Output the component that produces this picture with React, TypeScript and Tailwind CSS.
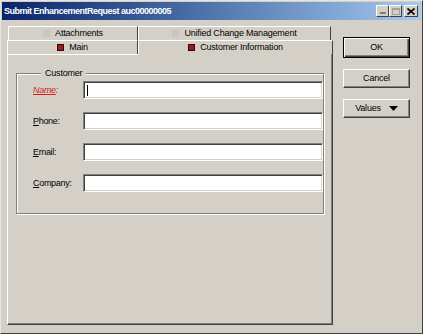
import React from 'react'

const FONT = { fontFamily: '"Liberation Sans", Arial, sans-serif' }

function TabIcon({ active }: { active: boolean }) {
  return active ? (
    <span className="inline-block w-[7px] h-[7px] bg-[#9b1b1b] border border-[#2a0a0a] mr-[5px]" />
  ) : (
    <span className="inline-block w-[7px] h-[7px] bg-[#c8c6c0] mr-[5px]" />
  )
}

function Tab({ label, width, active }: { label: string; width: number; active: boolean }) {
  return (
    <div
      style={{ width }}
      className="h-[14px] flex items-center justify-center text-[9px] tracking-[-0.2px] text-black border-l border-white border-t border-r border-r-[#404040]"
    >
      <TabIcon active={active} />
      <span className="leading-none">{label}</span>
    </div>
  )
}

function Field({ label, mnemonic, rest, required }: { label: string; mnemonic: string; rest: string; required?: boolean }) {
  return (
    <div className="flex items-center h-[18px]">
      <label
        className={
          'w-[50px] text-[9px] tracking-[-0.3px] leading-none ' +
          (required ? 'text-[#d42020] italic' : 'text-black')
        }
      >
        {required ? (
          <span className="underline">{label}</span>
        ) : (
          <>
            <span className="underline">{mnemonic}</span>
            {rest}
          </>
        )}
        :
      </label>
      <div className="w-[240px] h-[18px] bg-white border-t border-l border-[#808080] border-b border-r border-b-white border-r-white shadow-[inset_1px_1px_0_#404040,inset_-1px_-1px_0_#d4d0c8] flex items-center pl-[3px]">
        {required && <span className="w-[1px] h-[11px] bg-black" />}
      </div>
    </div>
  )
}

function Button({ children, primary }: { children: React.ReactNode; primary?: boolean }) {
  return (
    <div
      className={
        'w-[67px] flex items-center justify-center text-[9px] tracking-[-0.2px] text-black bg-[#d4d0c8] ' +
        (primary
          ? 'h-[21px] border border-black shadow-[inset_1px_1px_0_#fff,inset_-1px_-1px_0_#404040,inset_-2px_-2px_0_#808080]'
          : 'h-[19px] border-t border-l border-white border-b border-r border-b-[#404040] border-r-[#404040] shadow-[inset_-1px_-1px_0_#808080]')
      }
    >
      {children}
    </div>
  )
}

export default function App() {
  return (
    <div style={FONT} className="w-[423px] h-[334px] bg-[#d4d0c8] flex flex-col border-l border-t border-[#e8e6e2] border-r border-b border-r-[#404040] border-b-[#404040] overflow-hidden">
      {/* title bar */}
      <div className="h-[18px] mx-[1px] mt-[1px] flex items-center bg-gradient-to-r from-[#0a246a] to-[#a6caf0] pl-[2px] pr-[3px]">
        <span className="text-white font-bold text-[9px] tracking-[-0.5px] leading-none flex-1">Submit EnhancementRequest auc00000005</span>
        <div className="flex items-center">
          <div className="w-[13px] h-[12px] bg-[#d4d0c8] border-t border-l border-white border-b border-r border-b-[#404040] border-r-[#404040] flex items-end justify-center pb-[2px]">
            <span className="w-[6px] h-[2px] bg-[#808080]" />
          </div>
          <div className="w-[13px] h-[12px] bg-[#d4d0c8] border-t border-l border-white border-b border-r border-b-[#404040] border-r-[#404040] flex items-center justify-center">
            <span className="w-[8px] h-[7px] border border-[#a0a0a0] border-t-2" />
          </div>
          <div className="ml-[2px] w-[14px] h-[12px] bg-[#d4d0c8] border-t border-l border-white border-b border-r border-b-[#404040] border-r-[#404040] flex items-center justify-center">
            <svg width="8" height="7" viewBox="0 0 8 7">
              <path d="M0.5 0.5 L7.5 6.5 M7.5 0.5 L0.5 6.5" stroke="#000" strokeWidth="1.6" />
            </svg>
          </div>
        </div>
      </div>

      <div className="flex pl-[6px] pt-[6px]">
        {/* tabs + panel */}
        <div className="w-[326px] flex flex-col">
          <div className="flex pl-[1px]">
            <Tab label="Attachments" width={130} active={false} />
            <Tab label="Unified Change Management" width={193} active={false} />
          </div>
          <div className="flex">
            <Tab label="Main" width={131} active />
            <Tab label="Customer Information" width={195} active />
          </div>
          <div className="h-[271px] border-l border-white border-r border-b border-r-[#404040] border-b-[#404040] shadow-[inset_-1px_-1px_0_#808080] flex flex-col">
            <div className="flex">
              <div className="w-[130px] h-[1px] bg-white" />
            </div>
            <fieldset className="mx-[8px] mt-[14px] h-[145px] border border-[#808080] shadow-[inset_1px_1px_0_#fff,1px_1px_0_#fff] pl-[16px]">
              <legend className="ml-[8px] px-[4px] text-[9px] tracking-[-0.2px] leading-none text-black bg-[#d4d0c8]">Customer</legend>
              <div className="flex flex-col gap-[13px] pt-[3px]">
                <Field label="Name" mnemonic="N" rest="ame" required />
                <Field label="Phone" mnemonic="P" rest="hone" />
                <Field label="Email" mnemonic="E" rest="mail" />
                <Field label="Company" mnemonic="C" rest="ompany" />
              </div>
            </fieldset>
          </div>
        </div>

        {/* buttons */}
        <div className="flex flex-col pl-[10px] pt-[11px] gap-[11px]">
          <Button primary>OK</Button>
          <Button>Cancel</Button>
          <Button>
            <span className="mr-[8px]">Values</span>
            <svg width="9" height="5" viewBox="0 0 9 5">
              <path d="M0 0 H9 L4.5 5 Z" fill="#000" />
            </svg>
          </Button>
        </div>
      </div>
    </div>
  )
}
